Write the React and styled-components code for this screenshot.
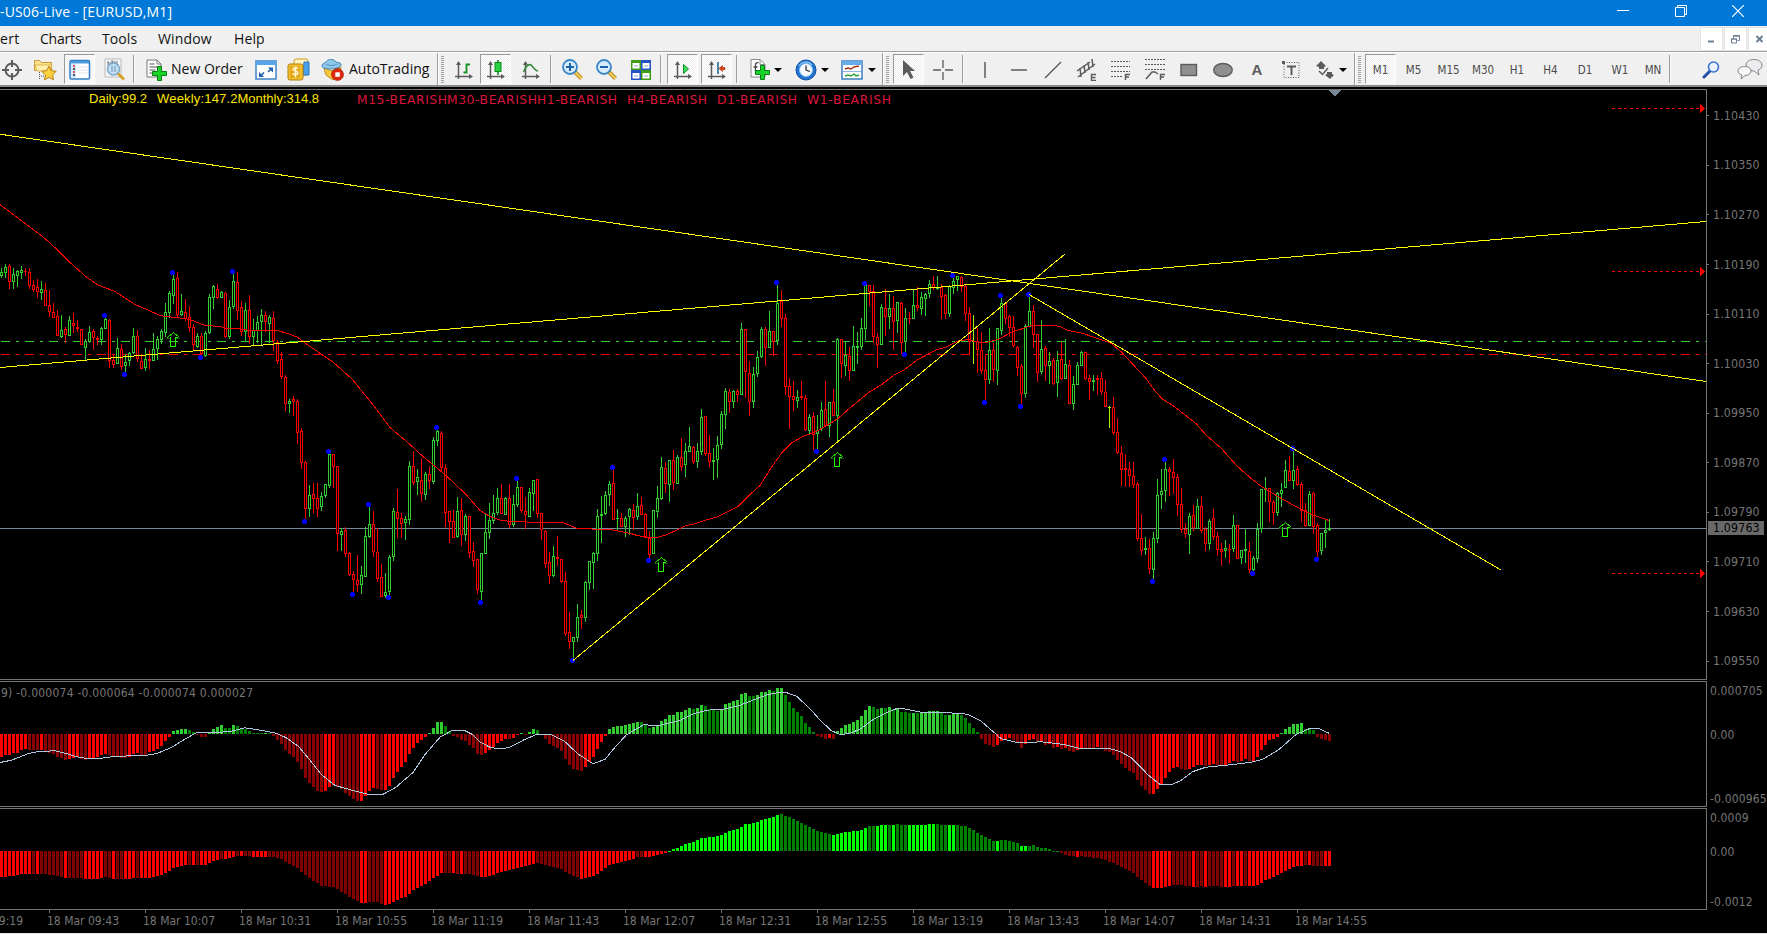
import React from "react";
import styled, { createGlobalStyle, css } from "styled-components";

const GlobalStyle = createGlobalStyle`
  body { margin: 0; background: #000; overflow: hidden; }
  * { box-sizing: border-box; }
`;

/* ------------------------------------------------------------------ data */

// Candle rows: colour, high, body top, body bottom, low (three units per pixel).
const SESSIONS = [
  { y: 190, rows: `G235,247,255,263 G222,232,248,263 R222,229,275,297 G234,252,275,296 G240,244,257,290 G228,240,248,266 R234,244,244,258 R234,247,287,297 R270,286,297,306 R267,292,305,323
G273,297,308,330 R279,300,347,347 R300,346,365,380 R339,367,383,383 R360,379,437,437 G375,420,440,444 R411,418,434,459 G378,390,437,437 R369,400,407,429 R390,411,416,426
R418,418,464,464 G449,454,473,508 G408,427,455,459 R418,424,443,479 R438,445,449,465 G411,415,449,464 G378,388,416,416 R387,391,512,533 R495,510,524,533 G444,475,521,521
R462,478,530,539 G492,516,527,548 G486,490,512,527 G414,438,488,491 R420,438,506,515 R492,514,536,536 G474,508,533,542 R480,508,512,537 G429,478,512,512 G438,448,476,509
G417,423,449,461 G339,367,428,441 G303,310,368,384 G252,268,317,342 R246,265,374,381 G312,363,374,377 R327,367,386,392 R348,382,413,426 R402,412,464,480 G429,438,470,473
R429,438,491,497 G423,430,497,500 G312,322,428,431 G285,289,322,357 R282,298,323,327 G303,307,322,322 R306,310,440,443 G330,352,440,446 G246,274,350,357 R246,277,362,390
R333,352,425,438 G339,361,425,453 R315,361,440,461 G387,420,440,465 G378,397,420,459 G357,376,395,463 R363,376,395,426 G375,382,401,459 R363,385,452,483 R450,457,512,521
R486,508,560,567 R555,562,641,662 G627,633,641,668 R618,628,635,677 R627,634,728,762 R714,724,818,836 R813,817,956,986 G885,916,956,980 R879,913,926,968 R879,925,956,980
G906,919,950,962 G882,883,917,923 G790,793,887,893 R792,793,830,893 R828,829,1031,1082 G1015,1023,1034,1082 R1011,1021,1091,1101 R1086,1090,1154,1157 R1143,1153,1169,1206 R1095,1171,1184,1205
G1128,1156,1184,1211 G1011,1039,1160,1160 G948,1003,1040,1044 R963,1003,1085,1101 R1015,1087,1166,1175 R1122,1162,1220,1220 G1149,1207,1217,1223 G1095,1102,1205,1217 G954,964,1100,1112 R897,967,986,1043
R969,985,1001,1043 G978,988,998,1049 G813,829,989,1004 R783,829,878,884 G837,862,875,914 R804,871,911,935 G846,853,914,929 R828,853,872,896 G741,751,875,881 G717,724,752,768
R723,730,833,843 R822,835,968,1010 R963,964,995,1058 R960,994,1043,1043 G921,964,1040,1043` },
  { y: 380, rows: `R354,391,464,497 G402,409,464,482 R408,409,518,533 R486,514,542,560 R537,538,629,641
G519,520,635,660 G402,457,521,521 G369,421,458,477 G345,400,422,431 G324,355,398,404 R312,355,401,401 G351,355,404,404 R312,355,434,443 G345,373,434,440 G300,322,374,380
R321,322,392,398 R351,394,404,446 G324,337,410,410 G300,301,341,392 R297,298,401,413 R400,401,449,479 R450,454,551,563 R516,547,587,611 G498,529,587,590 R468,532,536,557
R537,538,605,609 R576,604,761,768 R696,757,785,806 G771,772,785,836 G672,712,773,786 R690,706,713,746 G603,607,713,725 G543,544,608,629 G516,520,548,627 G387,409,521,543
G348,403,406,488 G333,346,401,404 G303,313,344,377 R270,310,419,419 G387,414,416,450 R399,415,440,440 G408,415,440,471 G384,388,410,464 R372,391,413,450 G339,379,410,419
R351,376,404,404 R399,403,472,474 R453,475,524,533 G390,391,520,520 G318,355,395,414 G231,262,356,359 R246,265,311,339 G240,241,314,365 R210,241,308,329 G225,232,310,310
R174,232,260,272 G189,214,254,290 G141,199,214,216 R198,202,245,251 G189,214,245,263 G87,112,215,225 R108,109,221,227 R165,220,245,261 G204,241,245,299 G168,196,239,293
G93,103,194,207 G24,34,104,147 R27,37,65,98 G30,34,65,83 R27,34,44,66` },
  { y: 240, rows: `G249,268,464,464 R267,268,395,473 R363,400,485,527 G381,403,485,503 G333,352,401,411
G261,268,350,353 R261,268,322,377 G213,274,322,322 R273,274,305,347 G135,190,302,314 R150,184,236,260 R222,235,440,464 R414,439,470,566 R423,469,479,513 G450,472,482,503
R423,469,473,479 R465,475,569,572 G522,532,572,582 R516,529,584,629 G525,571,581,627 G486,511,566,572 R423,508,557,557 G486,487,557,590 R447,487,527,527 G294,298,527,602
R297,298,371,413 G306,346,377,407 R321,349,392,422 G258,319,392,392 G276,319,322,371 G234,265,320,329 G135,136,266,299 R135,136,154,197 R135,154,290,308 R279,292,314,383
G192,202,314,314 R147,205,230,287 G162,205,230,266 R168,205,245,329 G186,187,242,278 R186,190,308,341 G204,235,305,341 R216,234,236,251 G150,196,236,236 R141,196,203,213
G156,172,206,225 G159,163,176,227 G120,133,160,174 R108,133,143,149 G108,142,144,150 R132,142,170,237 R162,166,221,237 G135,139,221,230 G114,124,143,162 G108,109,119,152
R108,112,139,156 R132,139,220,243 R201,220,305,343 L225,303,303,372 R264,304,328,399 R276,331,392,401 R342,391,419,482 G264,331,419,431 R309,331,389,426 G264,265,392,434
G171,190,272,284 R189,190,236,251 R225,229,263,291 R228,262,317,321 R318,322,382,407 R372,379,461,494 G252,259,461,474 G168,214,260,260 R195,214,284,324 R282,283,398,426
G240,328,395,401 R318,325,377,422 G336,364,376,432 R354,361,431,434 G333,361,428,470 R306,358,416,419 G297,373,416,416 R360,376,491,491 G408,433,491,510 G366,376,433,433
G333,337,376,376 R336,337,415,418 R405,415,424,479 G405,420,424,453 R405,415,419,465` },
  { y: 280, rows: `R276,295,335,345 R300,337,380,380 L378,382,382,444 R351,382,458,465 R414,457,518,522
R498,520,569,618 R522,565,569,621 R546,569,587,621 R546,589,614,624 R606,613,776,783 R702,775,812,825 G771,804,808,825 R777,805,866,882 G756,775,869,897 G597,646,776,789
G567,633,643,687 G543,568,632,666 R561,568,575,648 R537,577,593,642 R582,592,674,708 R624,673,748,759 R729,748,761,774 G699,709,764,822 R675,706,743,753 G657,679,745,745
R648,679,752,759 R741,748,791,813 G717,724,791,810 R687,715,770,780 R756,769,809,828 R789,808,815,858 G780,805,812,834 R792,807,809,849 G705,736,806,816 R735,736,836,836
G810,811,833,852 G747,808,812,849 R786,814,869,879 G828,835,869,876 G729,748,836,849 G627,628,745,759 G591,624,627,666 R624,625,665,726 R660,667,698,735 G636,640,698,708
G609,631,641,681 G540,571,622,624 R528,574,602,603 G510,571,602,627 R558,568,614,618 R606,613,692,726 R669,691,737,740 G633,643,737,738 R636,640,740,762 R729,736,815,831
G759,760,812,825 G717,751,758,804 G717,745,749,753` },
];

const CANDLES = SESSIONS.flatMap(({ y, rows }) =>
  rows.trim().split(/\s+/).map((row) => {
    const [high, top, bottom, low] = row.slice(1).split(",").map(Number);
    return {
      color: row[0],
      high: y + Math.floor(high / 3),
      top: y + Math.floor(top / 3),
      bottom: y + Math.floor(bottom / 3),
      low: y + Math.floor((low - 1) / 3),
    };
  })
);

const AVERAGE = "0,204 45,238 57,249 70,262 87,277 98,284.5 115,291 135,304 148,309.5 160,315 165,316 176,317 190,319 205,325 220,326 227,328 240,328.5 250,330 262,329.5 275,329.5 288,333 298,337 310,346 333,361.5 352,378.5 370,400.5 390,427 410,444 423,456 440,470 453,481.5 466,494 480,510 490,516 500,519.5 510,521 520,520.5 530,522 555,522 562,521.5 570,525 577,528 592,528.5 608,528.5 620,531 631,533 637,535 646,536.5 657,537 666,534.5 677,529.5 685,525.5 696,523 706,519.5 717,516.5 738,506 750,494 760,485 772,466 782,452 792,442 803,436 815,431.5 826,425.5 838,418 850,407.5 868,392.5 881.7,384 895,374 903,370 917,359.7 928,353.5 937,349 945,347 958,340.5 968,339 975,341 982,342 988,341.5 998,339 1006.5,334.5 1013,331 1021.5,328.5 1030,325.5 1038,324.5 1050,324.5 1060,326 1068,330 1083,332.8 1097,338 1110,342 1121.5,351.5 1133,364 1146,378 1155,390.5 1163,399 1173,405 1196.5,423.5 1206.5,435 1221.5,448 1236.5,465 1250,477 1261.5,486 1273,493 1283,499 1301.5,509 1313,514.5 1329,520";

const FRACTALS = [[104,315],[124,374],[172,272],[200,357],[232,271],[304,521],[328,451],[352,594],[368,504],[388,597],[436,427],[480,602],[516,478],[572,660],[612,467],[648,560],[816,451],[776,282],[864,283],[904,354],[952,275],[984,402],[1000,295],[1020,406],[1028,294],[1152,581],[1164,459],[1252,573],[1292,448],[1316,559]];

const BUY_ARROWS = [[173,332],[661,557],[837,452],[1285,522]];
const LEVEL_ARROWS = [108, 271, 573];

const MOMENTUM = [262,256,256,249,248,240,238,240,240,241,240,245,249,252,261,264,270,267,264,262,267,270,265,265,262,255,252,256,258,261,264,264,261,252,250,255,255,246,243,237,228,213,201,183,180,177,177,180,186,195,201,201,189,177,171,165,174,174,165,168,174,177,183,189,189,189,188,189,198,210,222,240,252,261,276,297,324,339,351,363,366,363,351,346,350,357,369,378,387,393,392,378,363,354,357,360,359,348,324,306,291,276,252,234,219,210,201,189,174,156,155,168,183,197,201,210,213,225,234,252,255,249,240,231,219,213,207,208,204,195,189,193,186,177,180,192,207,222,228,234,243,267,285,297,300,303,291,276,261,237,216,197,178,171,168,167,165,162,159,156,157,165,174,171,165,153,147,135,134,126,125,120,114,117,114,105,108,117,118,123,117,102,99,93,90,72,69,78,79,75,66,65,60,63,54,53,75,96,114,126,138,159,171,186,197,201,207,204,207,183,174,165,162,156,150,138,120,108,111,117,114,115,111,117,116,126,127,129,128,130,129,126,124,123,122,129,135,134,132,129,135,144,159,174,186,207,222,225,231,225,212,206,204,210,216,234,222,210,207,216,213,224,222,234,231,237,234,243,246,240,234,235,235,236,232,236,243,245,255,270,282,294,303,309,330,348,360,372,371,357,342,324,306,294,291,297,300,297,291,285,284,288,285,282,284,287,285,279,273,276,273,267,273,272,261,240,225,211,207,201,189,177,171,162,161,159,177,178,179,201,207,210,213];

const SIGNAL = "0,762 11.5,759.7 28.7,753 38,751 55.5,750.3 67,753.3 78.4,756.7 90,758.3 99.5,758 111,756.3 130,755.3 145.4,755 157,753 172,746.7 183.7,739.3 196,732.5 214.3,732.3 231.5,730.7 245,727.3 264,730.3 276.3,732.7 287,737.7 298.5,746 308,757.3 321.4,774 335,785 352,789.7 369.3,794 382.7,794 396,786.7 413.3,771.7 424.8,754.3 440,736.7 451.5,730.3 465,730.3 472.6,734 480,741.3 489.8,746.7 499.4,748.5 509,747 524,739.3 537.6,733.5 551,734 564.4,740.7 577.8,753.3 593,763.3 605.3,758.7 613,749 626.4,734.3 643.6,724.3 658.9,725 680,720 693.3,713.3 706.7,709.7 724,708.5 739,705.3 754.5,699 768,694 777.5,692.3 787,692.3 796.6,695.7 810,708.3 819.6,719 831,730 840.6,734 850,733 861.7,727.7 873,719 887,712 896,708.3 903.8,708.3 921,711.7 949.7,712.3 967,713.7 980.3,720 1001.4,738.3 1018.6,742.3 1041.5,741.3 1064.5,744 1079.8,748 1110.4,748.3 1120,751 1131.5,757.3 1148.7,775 1160,784 1171.6,784 1181,780 1193,771 1206,766.7 1236,763.7 1251,761.7 1262.4,759 1279,749 1296,734 1309,728.3 1319.3,728.3 1329,732.7";

const TREND_KEYS = [[0,621],[2,618],[4,615],[6,611],[11,611],[13,616],[16,624],[20,624],[21,627],[24,627],[26,621],[28,627],[31,627],[33,624],[37,624],[39,618],[41,609],[43,594],[46,585],[51,585],[53,573],[55,567],[57,565],[59,559],[61,558],[63,560],[68,560],[70,567],[72,582],[74,594],[76,615],[78,632],[80,648],[83,651],[85,665],[88,687],[90,699],[91,699],[92,696],[94,696],[96,705],[98,696],[100,684],[101,681],[103,660],[106,642],[108,624],[110,609],[113,609],[114,611],[117,612],[118,616],[120,621],[122,618],[124,609],[127,600],[130,591],[134,579],[137,588],[140,597],[142,612],[145,627],[148,618],[150,603],[152,585],[154,579],[157,570],[159,561],[162,561],[164,555],[166,549],[167,542],[168,537],[169,533],[171,522],[173,515],[175,504],[178,501],[180,495],[182,483],[184,477],[186,462],[188,459],[190,450],[193,441],[194,435],[195,432],[197,441],[199,453],[201,465],[203,477],[205,486],[208,495],[210,489],[215,480],[217,468],[219,467],[221,464],[223,464],[224,462],[226,465],[230,465],[232,462],[234,462],[236,465],[239,465],[241,468],[243,480],[245,495],[248,512],[249,513],[250,510],[252,512],[254,519],[255,528],[256,528],[258,525],[259,531],[262,537],[263,542],[264,542],[265,549],[267,558],[268,558],[269,561],[270,558],[272,561],[275,566],[278,579],[281,597],[283,609],[285,630],[287,648],[288,654],[290,654],[292,648],[293,645],[297,647],[298,651],[300,648],[301,651],[303,647],[306,651],[308,648],[313,648],[314,645],[316,630],[318,621],[320,609],[323,591],[325,587],[327,585],[329,588],[332,588]];

// Bar indexes where the slow oscillator switches between bright and dark.
const TREND_SWITCHES = [8,9,10,16,17,21,26,28,29,31,34,35,47,48,49,50,55,56,59,60,61,63,67,90,92,96,111,113,114,115,116,120,134,145,159,161,195,208,217,219,222,223,224,227,234,237,239,249,250,255,257,269,270,288,293,298,299,301,302,306,308,309,311,312,326,327,328,331];

const interpolate = (keys, i) => {
  const k = keys.findIndex(([at]) => at >= i);
  if (keys[k][0] === i) return keys[k][1];
  const [x0, y0] = keys[k - 1];
  const [x1, y1] = keys[k];
  return y0 + ((y1 - y0) * (i - x0)) / (x1 - x0);
};

const barBox = (zero, y) => {
  const edge = Math.round(y);
  return edge < zero ? { y: edge, h: zero - edge } : { y: zero, h: Math.max(1, edge - zero) };
};

const PRICES = ["1.10430","1.10350","1.10270","1.10190","1.10110","1.10030","1.09950","1.09870","1.09790","1.09710","1.09630","1.09550"];
const TIMES = ["09:19","09:43","10:07","10:31","10:55","11:19","11:43","12:07","12:31","12:55","13:19","13:43","14:07","14:31","14:55"];
const BIASES = [["M15-BEARISH",90],["M30-BEARISH",90],["H1-BEARISH",80],["H4-BEARISH",80],["D1-BEARISH",80],["W1-BEARISH",84]];
const PERIODS = [["M5",35],["M15",35],["M30",34],["H1",34],["H4",33],["D1",36],["W1",34],["MN",32]];

/* ---------------------------------------------------------------- styles */

const uiFont = css`font-family: "Open Sans", "Noto Sans", sans-serif;`;
const chartFont = css`
  font-family: "DejaVu Sans Condensed", "DejaVu Sans", sans-serif;
  font-stretch: condensed;
`;

const Window = styled.div`
  width: 1767px;
  height: 934px;
  display: flex;
  flex-direction: column;
  overflow: hidden;
  background: #000;
`;

const TitleBar = styled.header`
  ${uiFont}
  height: 26px;
  flex: none;
  display: flex;
  justify-content: space-between;
  background: #0078d7;
  color: #fff;
  font-size: 14px;
  line-height: 23px;
  letter-spacing: 0.16px;
  white-space: pre;
`;

const WindowControls = styled.div`
  display: flex;
  width: 173px;
  height: 22px;
`;

const WindowButton = styled.span`
  width: 58px;
  display: grid;
  place-items: center;
`;

const MenuBar = styled.nav`
  ${uiFont}
  height: 26px;
  flex: none;
  display: flex;
  background: #f0f0f0;
  border-bottom: 1px solid #a0a0a0;
  color: #111;
  font-size: 14px;
  line-height: 25px;
`;

const MenuItem = styled.span`
  width: ${(p) => p.$w}px;
  letter-spacing: ${(p) => p.$ls || 0}px;
  white-space: nowrap;
`;

const DocumentControls = styled.div`
  margin-left: auto;
  display: flex;
  gap: 1px;
  width: 67px;
  overflow: hidden;
`;

const DocumentButton = styled.span`
  flex: none;
  width: 23px;
  height: 24px;
  margin-top: 1px;
  display: grid;
  place-items: center;
  background: #fff;
  border: 1px solid #e3e3e3;
`;

const Toolbar = styled.div`
  height: 35px;
  flex: none;
  display: flex;
  align-items: stretch;
  background: #f0f0f0;
  border-top: 1px solid #fff;
  border-bottom: 2px solid #8a8a8a;
`;

const Tool = styled.span`
  ${uiFont}
  flex: none;
  width: ${(p) => p.$w}px;
  padding-left: ${(p) => p.$pad || 0}px;
  display: flex;
  align-items: center;
  justify-content: ${(p) => (p.$start ? "flex-start" : "center")};
  gap: ${(p) => p.$gap || 0}px;
  color: #111;
  font-size: 14px;
  white-space: nowrap;
  padding-bottom: 1px;
  svg { flex: none; display: block; margin-top: 2px; }
`;

const Pressed = styled(Tool)`
  height: 30px;
  margin-top: 1px;
  margin-right: ${(p) => p.$mr || 0}px;
  border: 1px solid;
  border-color: #9a9a9a #fff #fff #9a9a9a;
  background: conic-gradient(#fff 25%, #efefef 0 50%, #fff 0 75%, #efefef 0) 0 0 / 2px 2px;
`;

const periodText = css`
  ${chartFont}
  font-size: 11.5px;
  color: #4c4c4c;
  padding-top: 1px;
  padding-bottom: 0;
`;
const Period = styled(Tool)`${periodText}`;
const PressedPeriod = styled(Pressed)`${periodText}`;

const Divider = styled.i`
  flex: none;
  width: 2px;
  margin: 2px ${(p) => p.$mr || 0}px 2px ${(p) => p.$ml || 0}px;
  border-left: 1px solid #9c9c9c;
  border-right: 1px solid #f8f8f8;
`;

const BandEdge = styled(Divider)`
  margin-top: 0;
  margin-bottom: 0;
  border-right-color: #fff;
`;

const Grip = styled.i`
  flex: none;
  width: 3px;
  margin: 3px 4px 2px 2px;
  background: repeating-linear-gradient(#a2a2a2 0 1px, #f0f0f0 1px 2px);
`;

const Caret = styled.i`
  border: 4px solid transparent;
  border-top-color: #000;
  border-bottom: 0;
  margin-top: 2px;
`;

const Workspace = styled.main`
  flex: 1;
  display: flex;
  flex-direction: column;
  padding-top: 2px;
  background: #000;
`;

const Pane = styled.section`
  flex: none;
  display: grid;
  grid-template: 100% / 1707px 60px;
  height: ${(p) => p.$h}px;
  margin-bottom: ${(p) => p.$mb || 0}px;
`;

const Plot = styled.div`
  border: 1px solid #747474;
  border-left: 0;
  overflow: hidden;
  svg { display: block; }
`;

const Scale = styled.div`
  ${chartFont}
  position: relative;
  color: #767676;
  font-size: 12px;
  display: flex;
  flex-direction: column;
  padding: ${(p) => p.$pad || "0"};
`;

const PriceLabel = styled.span`
  flex: none;
  display: flex;
  align-items: center;
  height: 49.58px;
  font-size: 12.3px;
  letter-spacing: 0.15px;
  &::before { content: ""; width: 2px; height: 1px; margin-right: 4px; background: #747474; }
`;

const ScaleLabel = styled.span`
  flex: none;
  height: 14px;
  line-height: 14px;
  padding-left: 3px;
  margin-top: ${(p) => p.$mt}px;
  font-size: 12px;
  letter-spacing: 0.15px;
  white-space: nowrap;
`;

const CurrentPrice = styled.span`
  position: absolute;
  left: 1px;
  top: 432px;
  width: 56px;
  height: 14px;
  line-height: 15px;
  padding-left: 5px;
  background: #696969;
  color: #000;
  font-size: 12.3px;
  letter-spacing: 0.15px;
`;

const TimeScale = styled.footer`
  ${chartFont}
  flex: none;
  height: 24px;
  display: flex;
  overflow: hidden;
  color: #767676;
  font-size: 12px;
  border-bottom: 1px solid #e8e8e8;
`;

const TimeTick = styled.span`
  flex: none;
  width: 96px;
  line-height: 22px;
  white-space: nowrap;
  text-indent: -1px;
  background: linear-gradient(#747474, #747474) 1px 0 / 1px 3px no-repeat;
  &:first-child { margin-left: -48px; }
`;

const NoteText = styled.text`
  font-family: "Liberation Sans", Arial, sans-serif;
  font-size: 13px;
  fill: #ffe600;
`;

const BiasText = styled.text`
  font-family: "DejaVu Sans", sans-serif;
  font-size: 12.3px;
  fill: #dc143c;
`;

const StudyText = styled.text`
  ${chartFont}
  font-size: 12px;
  fill: #767676;
`;

/* ----------------------------------------------------------------- icons */

const Icon = ({ size = 20, children }) => (
  <svg width={size} height={size} viewBox={`0 0 ${size} ${size}`} fill="none">{children}</svg>
);

const TargetIcon = () => (
  <Icon size={22}><g stroke="#5c5c5c" strokeWidth="2"><circle cx="11" cy="11" r="6.5" /><path d="M11 1v7M11 14v7M1 11h7M14 11h7" /></g></Icon>
);
const FavoritesIcon = () => (
  <Icon size={24}>
    <path d="M1.5 5.5V2.5h5l2 2h10v8h-17z" fill="#fbe28a" stroke="#c9992e" />
    <path d="M2 7h17l-2 6H4z" fill="#fff0b0" stroke="#d7aa40" strokeWidth=".8" />
    <path d="M6.5 14v8M8 18h4" stroke="#555" strokeDasharray="1 1" />
    <path d="M16 8l2.3 4.6 5 .7-3.7 3.5.9 5L16 19.4l-4.500 2.400.9-5-3.700-3.500 5-.7z" fill="#fcd23c" stroke="#b87d18" />
  </Icon>
);
const NavigatorIcon = () => (
  <Icon size={22}>
    <rect x="1" y="1.500" width="19.500" height="18.500" rx="1.500" fill="#fff" stroke="#2e7cc4" strokeWidth="1.500" />
    <path d="M1.500 2h18.500v2.500H1.500z" fill="#4b9be0" /><path d="M2 5h5v14H2z" fill="#d5e8fa" />
    <path d="M4 7h2M4 13h2" stroke="#e22" strokeWidth="1.600" /><path d="M4 10h2M4 16h2" stroke="#222" strokeWidth="1.400" />
    <path d="M9 8h10M9 11h10M9 14h10" stroke="#e1e6ec" />
  </Icon>
);
const TesterIcon = () => (
  <Icon size={23}>
    <path d="M2 1h16v18H2z" fill="#f7f7f7" stroke="#b9b9b9" /><path d="M5 3v5M9 2v5M14 3v5M5 5h3M9 4h4" stroke="#777" />
    <circle cx="10.500" cy="11" r="6" fill="#b9dcf5" fillOpacity=".85" stroke="#7aa7cc" strokeWidth="1.500" />
    <path d="M9 8v6M12 8v6" stroke="#6d90ab" /><path d="M15 15.500l6 6" stroke="#d4a22a" strokeWidth="3" />
  </Icon>
);
const Plus = ({ x, y }) => (
  <path transform={`translate(${x} ${y})`} d="M5 0h4v5h5v4H9v5H5V9H0V5h5z" fill="#19d328" stroke="#087d13" />
);
const NewOrderIcon = () => (
  <Icon size={22}>
    <path d="M2 1h10l4 4v13H2z" fill="#fff" stroke="#777" /><path d="M12 1v4h4" stroke="#777" />
    <path d="M4.500 5h5M4.500 8h8M4.500 11h6M4.500 14h5" stroke="#555" strokeWidth="1.200" />
    <Plus x={7.5} y={7.5} />
  </Icon>
);
const FullScreenIcon = () => (
  <Icon size={22}>
    <rect x="1" y="2" width="20" height="18" fill="#fff" stroke="#3c83c9" strokeWidth="1.500" /><path d="M1 2h20v4H1z" fill="#58a5e8" />
    <path d="M13 8.500h5v5zM4 13v5h5z" fill="#1f5faf" /><path d="M13 13l3-3M9 13.500l-3 3" stroke="#1f5faf" strokeWidth="1.500" />
  </Icon>
);
const MoneyIcon = () => (
  <Icon size={23}>
    <rect x="7" y="1" width="14" height="16" rx="2" fill="#fff6c4" stroke="#c9971c" /><path d="M17 4h5v13h-6z" fill="#4aa1ea" stroke="#2a76bb" />
    <rect x="1" y="6" width="15" height="16" rx="2" fill="#f3c22f" stroke="#b47d0e" /><rect x="3" y="8" width="10" height="12" fill="#e4a91c" />
    <path d="M11 10.500c-1-1.300-5-1.300-5 .8 0 2.200 5 1.200 5 3.500 0 2.200-4 2.200-5.400.7M8.500 8.500v11" stroke="#fff7cf" strokeWidth="1.500" />
  </Icon>
);
const AutoTradingIcon = () => (
  <Icon size={23}>
    <path d="M3 10l8 3 9-4-1 7-7 6-7-5z" fill="#f6c940" stroke="#c08b1a" />
    <path d="M1 8c0-3 4-3 5-5 1-2 6-2 8 0 1 2 5 1 6 3 1 3-6 5-10 5S1 10 1 8z" fill="#8fc6e9" stroke="#3b87b5" />
    <path d="M5 6c3 2 8 2 11 0" stroke="#4a94c0" />
    <circle cx="16.500" cy="16.500" r="5.800" fill="#e02a10" stroke="#b31700" /><rect x="14.300" y="14.300" width="4.500" height="4.500" fill="#fff" />
  </Icon>
);

const Axes = ({ children }) => (
  <Icon size={20}>
    <g stroke="#5a5a5a" strokeWidth="1.500"><path d="M4.500 3v16M1 16.500h15" /></g>
    <path d="M4.500 1L2 5h5zM19 16.500L15 14v5z" fill="#5a5a5a" />
    {children}
  </Icon>
);
const BarsIcon = () => <Axes><path d="M12.500 3.500v10M12.500 4.500H16M9.500 12.500h3" stroke="#159222" strokeWidth="1.800" /></Axes>;
const CandlesIcon = () => <Axes><path d="M12 0v15" stroke="#0d7f19" strokeWidth="1.500" /><rect x="9" y="2.500" width="6" height="9" fill="#2bd344" stroke="#0d8a1b" /></Axes>;
const LineIcon = () => <Axes><path d="M2.500 12C5 6 8 3.500 10 5s4 6 7 6" stroke="#3a8c42" strokeWidth="1.600" /></Axes>;
const ScrollIcon = () => <Axes><path d="M10.500 4.500l5 4.500-5 4.500z" fill="#39dd5a" stroke="#0d8a2b" /></Axes>;
const ShiftIcon = () => <Axes><path d="M11 2v12" stroke="#25678f" strokeWidth="1.600" /><path d="M12 8.500l3.500-3v2H18v2h-2.500v2z" fill="#d5400f" stroke="#b12e06" strokeWidth=".6" /></Axes>;

const Magnifier = ({ plus }) => (
  <Icon size={23}>
    <path d="M14 14l6.500 6.500" stroke="#b98b1d" strokeWidth="4" /><path d="M14 14l6.500 6.500" stroke="#f1cf58" strokeWidth="2" />
    <circle cx="9" cy="9" r="7" fill="#d6ecfb" stroke="#3a86c6" strokeWidth="1.800" />
    <path d={plus ? "M5 9h8M9 5v8" : "M5 9h8"} stroke="#1d62a6" strokeWidth="2" />
  </Icon>
);
const TilesIcon = () => (
  <Icon size={22}>
    <path d="M1 1h10v10H1zM11 11h10v10H11z" fill="#3f9c14" /><path d="M11 1h10v10H11zM1 11h10v10H1z" fill="#2450c8" />
    <path d="M2.500 4h7v5.500h-7zM12.500 4h7v5.500h-7zM2.500 14h7v5.500h-7zM12.500 14h7v5.500h-7z" fill="#fff" />
    <path d="M4 7h4M14 7h4M4 17h4M14 17h4" stroke="#8da9d8" />
  </Icon>
);
const IndicatorIcon = () => (
  <Icon size={21}>
    <path d="M2 .5h9l5 5V18H2z" fill="#fff" stroke="#888" /><path d="M11 .5v5h5" stroke="#888" />
    <path d="M9.500 4C8 3 6.500 4 6.500 6v9M4.500 8h4" stroke="#444" strokeWidth="1.300" />
    <Plus x={6.5} y={6.5} />
  </Icon>
);
const ClockIcon = () => (
  <Icon size={22}>
    <circle cx="11" cy="11" r="10" fill="#1d74d2" stroke="#0e4f9f" /><circle cx="11" cy="11" r="6.500" fill="#f7fafd" stroke="#8dc0ef" />
    <path d="M11 6.500V11l4 1.500" stroke="#333" strokeWidth="1.300" /><path d="M4 7c2-4 9-6 13-1" stroke="#7bbcf5" strokeWidth="1.500" />
  </Icon>
);
const TemplateIcon = () => (
  <Icon size={22}>
    <rect x="1" y="2" width="20" height="18" fill="#fff" stroke="#3b7fc0" strokeWidth="1.500" /><path d="M1 2h20v4H1z" fill="#67ace8" />
    <path d="M2 12.500h18" stroke="#8eb4d8" /><path d="M4 10l3-1 3 1 3-2 5-1" stroke="#a4351c" strokeWidth="1.500" />
    <path d="M4 17l3-1 3 1 3-2 2 2 3-1" stroke="#2f9e35" strokeWidth="1.500" />
  </Icon>
);

const grey = "#5b5b5b";
const CursorIcon = () => <Icon><path d="M4 0v16l4-4 3.500 7 3-1.500L11 11h5z" fill={grey} /></Icon>;
const CrosshairIcon = () => <Icon><path d="M10 0v8M10 12v8M0 10h8M12 10h8" stroke={grey} strokeWidth="1.300" /></Icon>;
const VerticalIcon = () => <Icon><path d="M10 2v16" stroke={grey} strokeWidth="1.500" /></Icon>;
const HorizontalIcon = () => <Icon><path d="M2 10h16" stroke={grey} strokeWidth="1.500" /></Icon>;
const TrendIcon = () => <Icon><path d="M2 18L18 2" stroke={grey} strokeWidth="1.500" /></Icon>;
const ChannelIcon = () => (
  <Icon size={22}>
    <path d="M1 12L14 3M2 18L19 5M4 9l1 9M8 6l1 8M12 3l1 8M16 0l1 8" stroke={grey} strokeWidth="1.500" />
    <path d="M20 15.500h-4.500v6H20M15.500 18.500h4" stroke={grey} strokeWidth="1.400" />
  </Icon>
);
const FiboIcon = () => (
  <Icon size={20}>
    <path d="M0 1.500h19M0 6.500h19M0 11.500h19M0 16.500h12" stroke={grey} strokeDasharray="2 1" />
    <path d="M19 14.500h-4.500V20M14.500 17H18" stroke={grey} strokeWidth="1.400" />
  </Icon>
);
const FiboFanIcon = () => (
  <Icon size={21}>
    <path d="M0 .5h21M0 5.500h21M0 10.500h21" stroke={grey} strokeDasharray="2 1" />
    <path d="M1 20l6-7h3l3 2" stroke={grey} strokeWidth="1.500" /><path d="M20 15.500h-4.500V21M15.500 18H19" stroke={grey} strokeWidth="1.400" />
  </Icon>
);
const RectangleIcon = () => <Icon><rect x="2" y="4.500" width="15.500" height="11" fill="#8f8f8f" stroke={grey} strokeWidth="1.400" /></Icon>;
const EllipseIcon = () => <Icon><ellipse cx="10" cy="10" rx="9.300" ry="6.500" fill="#8f8f8f" stroke={grey} strokeWidth="1.300" /></Icon>;
const LetterTool = styled.b`
  font: bold 15px "Liberation Sans", sans-serif;
  color: #5b5b5b;
  margin-top: 2px;
`;
const LabelIcon = () => (
  <Icon size={20}><rect x="3" y="2.500" width="15" height="15" stroke={grey} strokeDasharray="1 1.500" /><path d="M6 6.500h9M10.500 6.500V15" stroke={grey} strokeWidth="2" /><path d="M1 1h3v3H1z" fill={grey} /></Icon>
);
const ShapesIcon = () => (
  <Icon size={20}><path d="M6 1l5 5-2 1v2H4V7L1 6zM15 19l-5-4 2-1v-2h5v2l2 1z" fill={grey} /><path d="M4 11l3.500 3.500L13 8" stroke={grey} strokeWidth="1.500" /></Icon>
);
const SearchIcon = () => (
  <Icon size={18}><path d="M8 10L2 16" stroke="#234fa8" strokeWidth="3" strokeLinecap="round" /><circle cx="11.500" cy="6" r="5" fill="#e9f3ff" stroke="#3b6fd0" strokeWidth="1.600" /></Icon>
);
const ChatIcon = () => (
  <Icon size={26}>
    <path d="M9 8c0-3 3.500-5.500 8-5.500s8 2.500 8 5.500-2 4.500-4 5l1 5-5-4C12 13.500 9 11.500 9 8z" fill="#ececee" stroke="#85858c" />
    <path d="M1 14c0-3 3-4.500 6.500-4.500S14 11 14 14s-3 4.500-6 4.500L4 22l1-4c-2.500-.5-4-2-4-4z" fill="#f8f8f8" stroke="#85858c" />
  </Icon>
);

/* ----------------------------------------------------------------- plots */

const CANDLE_COLORS = { G: "#32cd32", R: "#ff0000", L: "#a0f000" };

const Candle = ({ x, candle }) => {
  const { high, top, bottom, low } = candle;
  const fill = CANDLE_COLORS[candle.color];
  return (
    <g>
      <rect x={x} y={high} width="1" height={Math.max(1, low - high + 1)} fill={fill} />
      <rect x={x - 1} y={top} width="3" height={bottom - top + 1} fill={fill} />
      {bottom - top > 1 && <rect x={x} y={top + 1} width="1" height={bottom - top - 1} fill="#000" />}
    </g>
  );
};

const PricePlot = () => (
  <svg width="1706" height="589" viewBox="0 90 1706 589" shapeRendering="crispEdges" fill="none">
    <path d="M0 528.500H1706" stroke="#778899" />
    <path d="M1 341.500H1706" stroke="#32cd32" strokeDasharray="9 6 3 6" />
    <path d="M1 354.500H1706" stroke="#ff0000" strokeDasharray="9 6 3 6" />
    {CANDLES.map((candle, i) => <Candle key={i} x={1 + i * 4} candle={candle} />)}
    {FRACTALS.map(([x, y]) => <circle key={`${x}-${y}`} cx={x + 0.5} cy={y + 0.5} r="2.500" fill="#0000ff" />)}
    <polyline points={AVERAGE} transform="translate(0 .5)" stroke="#ff0000" />
    <g stroke="#ffff00">
      <path d="M0 134.200L1706 381.500" />
      <path d="M0 367.500L1706 221.500" />
      <path d="M573 660.500L1065 254" />
      <path d="M1029 294.500L1501 570" />
    </g>
    {BUY_ARROWS.map(([x, y]) => (
      <g key={x} transform={`translate(${x} ${y})`}>
        <path d="M-6 6.500H-2M3 6.500H7" stroke="#0a5c0a" />
        <path d="M-5.500 5.500L.5 .5L6.500 5.500" stroke="#22d800" />
        <path d="M-3 5.500H-2.500V14.500H2.500V5.500H5" stroke="#22ff00" />
      </g>
    ))}
    {LEVEL_ARROWS.map((y) => (
      <g key={y}>
        <path d={`M1612 ${y + 0.5}H1700`} stroke="#ff0000" strokeDasharray="3 3" />
        <path d={`M1700 ${y - 4}L1705.500 ${y + 0.5}L1700 ${y + 5}z`} fill="#ff0000" />
      </g>
    ))}
    <path d="M1328 90H1341L1334.500 96.500z" fill="#778899" />
    <NoteText x="89" y="103" textLength="58">Daily:99.2</NoteText>
    <NoteText x="157" y="103" textLength="80.500">Weekly:147.2</NoteText>
    <NoteText x="237.500" y="103" textLength="81.500">Monthly:314.8</NoteText>
    {BIASES.map(([label, width], i) => (
      <BiasText key={label} x={357 + i * 90} y="104" textLength={width}>{label}</BiasText>
    ))}
  </svg>
);

const MomentumPlot = () => {
  let rising = true;
  return (
    <svg width="1706" height="124" viewBox="0 682 1706 124" shapeRendering="crispEdges" fill="none">
      {MOMENTUM.map((value, i) => {
        if (i > 0 && value !== MOMENTUM[i - 1]) rising = value < MOMENTUM[i - 1];
        const box = barBox(734, 670 + value / 3);
        const fill = value < 192 ? (rising ? "#32cd32" : "#008000") : rising ? "#ff0000" : "#8b0000";
        return <rect key={i} x={i * 4} y={box.y} width="3" height={box.h} fill={fill} />;
      })}
      <polyline points={SIGNAL} stroke="#b0c4de" transform="translate(0 .5)" />
      <StudyText x="1" y="697" textLength="252">9) -0.000074 -0.000064 -0.000074 0.000027</StudyText>
    </svg>
  );
};

const TrendPlot = () => (
  <svg width="1706" height="100" viewBox="0 809 1706 100" shapeRendering="crispEdges">
    {CANDLES.map((_, i) => {
      const value = interpolate(TREND_KEYS, i);
      const box = barBox(851, 670 + value / 3);
      const bright = TREND_SWITCHES.filter((at) => at <= i).length % 2 === 0;
      const fill = value < 543 ? (bright ? "#00ff00" : "#008000") : bright ? "#ff0000" : "#800000";
      return <rect key={i} x={i * 4} y={box.y} width="3" height={box.h} fill={fill} />;
    })}
  </svg>
);

/* ------------------------------------------------------------------- app */

const Separator = () => (<><BandEdge /><Grip /></>);

const TopToolbar = () => (
  <Toolbar>
    <Tool $w={24}><TargetIcon /></Tool>
    <Tool $w={40} $pad={2}><FavoritesIcon /></Tool>
    <Pressed $w={31}><NavigatorIcon /></Pressed>
    <Tool $w={38}><TesterIcon /></Tool>
    <Divider />
    <Tool $w={115} $pad={10} $start $gap={4}><NewOrderIcon />New Order</Tool>
    <Tool $w={31}><FullScreenIcon /></Tool>
    <Tool $w={34}><MoneyIcon /></Tool>
    <Tool $w={122} $pad={6} $start $gap={5}><AutoTradingIcon />AutoTrading</Tool>
    <Separator />
    <Tool $w={32}><BarsIcon /></Tool>
    <Pressed $w={31}><CandlesIcon /></Pressed>
    <Tool $w={39}><LineIcon /></Tool>
    <Divider />
    <Tool $w={39} $pad={1}><Magnifier plus /></Tool>
    <Tool $w={30}><Magnifier /></Tool>
    <Tool $w={39}><TilesIcon /></Tool>
    <Divider $mr={5} />
    <Pressed $w={31} $mr={3}><ScrollIcon /></Pressed>
    <Pressed $w={31}><ShiftIcon /></Pressed>
    <Divider $ml={4} />
    <Tool $w={47} $pad={11} $start $gap={4}><IndicatorIcon /><Caret /></Tool>
    <Tool $w={47} $pad={10} $start $gap={4}><ClockIcon /><Caret /></Tool>
    <Tool $w={50} $pad={9} $start $gap={5}><TemplateIcon /><Caret /></Tool>
    <Separator />
    <Pressed $w={31}><CursorIcon /></Pressed>
    <Tool $w={38}><CrosshairIcon /></Tool>
    <Divider $mr={4} />
    <Tool $w={34}><VerticalIcon /></Tool>
    <Tool $w={34}><HorizontalIcon /></Tool>
    <Tool $w={34}><TrendIcon /></Tool>
    <Tool $w={34}><ChannelIcon /></Tool>
    <Tool $w={34}><FiboIcon /></Tool>
    <Tool $w={34}><FiboFanIcon /></Tool>
    <Tool $w={34}><RectangleIcon /></Tool>
    <Tool $w={34}><EllipseIcon /></Tool>
    <Tool $w={34}><LetterTool>A</LetterTool></Tool>
    <Tool $w={34}><LabelIcon /></Tool>
    <Tool $w={46} $pad={7} $start $gap={4}><ShapesIcon /><Caret /></Tool>
    <Separator />
    <PressedPeriod $w={31}>M1</PressedPeriod>
    {PERIODS.map(([label, width]) => <Period key={label} $w={width}>{label}</Period>)}
    <Divider $mr={20} />
    <Tool $w={40}><SearchIcon /></Tool>
    <Tool $w={36} $pad={2}><ChatIcon /></Tool>
  </Toolbar>
);

export default function App() {
  return (
    <Window>
      <GlobalStyle />
      <TitleBar>
        <span>-US06-Live - [EURUSD,M1]</span>
        <WindowControls>
          <WindowButton><svg width="12" height="12"><path d="M0 5.500h12" stroke="#fff" /></svg></WindowButton>
          <WindowButton><svg width="12" height="12" fill="none" stroke="#fff"><path d="M.5 2.500h9v9h-9zM2.500 2.500v-2h9v9h-2" /></svg></WindowButton>
          <WindowButton><svg width="12" height="12"><path d="M0 0l12 12M12 0L0 12" stroke="#fff" strokeWidth="1.200" /></svg></WindowButton>
        </WindowControls>
      </TitleBar>
      <MenuBar>
        <MenuItem $w={40} $ls={0.3}>ert</MenuItem>
        <MenuItem $w={62} $ls={-0.2}>Charts</MenuItem>
        <MenuItem $w={56} $ls={0.1}>Tools</MenuItem>
        <MenuItem $w={76} $ls={0.15}>Window</MenuItem>
        <MenuItem $w={40} $ls={0.1}>Help</MenuItem>
        <DocumentControls>
          <DocumentButton><svg width="7" height="8"><path d="M0 6.500h6" stroke="#6f7f92" strokeWidth="2" /></svg></DocumentButton>
          <DocumentButton><svg width="9" height="9" fill="none" stroke="#6f7f92"><path d="M.5 4h5v4h-5zM0 4h6M2.500 3.500v-3h6v5h-2M2.500 1.200h6" /></svg></DocumentButton>
          <DocumentButton><svg width="7" height="8"><path d="M.5 1l6 6M6.500 1l-6 6" stroke="#6f7f92" strokeWidth="2" /></svg></DocumentButton>
        </DocumentControls>
      </MenuBar>
      <TopToolbar />
      <Workspace>
        <Pane $h={591} $mb={1}>
          <Plot><PricePlot /></Plot>
          <Scale $pad="2px 0 0">
            {PRICES.map((price) => <PriceLabel key={price}>{price}</PriceLabel>)}
            <CurrentPrice>1.09763</CurrentPrice>
          </Scale>
        </Pane>
        <Pane $h={126} $mb={1}>
          <Plot><MomentumPlot /></Plot>
          <Scale>
            <ScaleLabel $mt={3}>0.000705</ScaleLabel>
            <ScaleLabel $mt={30}>0.00</ScaleLabel>
            <ScaleLabel $mt={50}>-0.000965</ScaleLabel>
          </Scale>
        </Pane>
        <Pane $h={102}>
          <Plot><TrendPlot /></Plot>
          <Scale>
            <ScaleLabel $mt={3}>0.0009</ScaleLabel>
            <ScaleLabel $mt={20}>0.00</ScaleLabel>
            <ScaleLabel $mt={36}>-0.0012</ScaleLabel>
          </Scale>
        </Pane>
        <TimeScale>
          {TIMES.map((time) => <TimeTick key={time}>18 Mar {time}</TimeTick>)}
        </TimeScale>
      </Workspace>
    </Window>
  );
}
